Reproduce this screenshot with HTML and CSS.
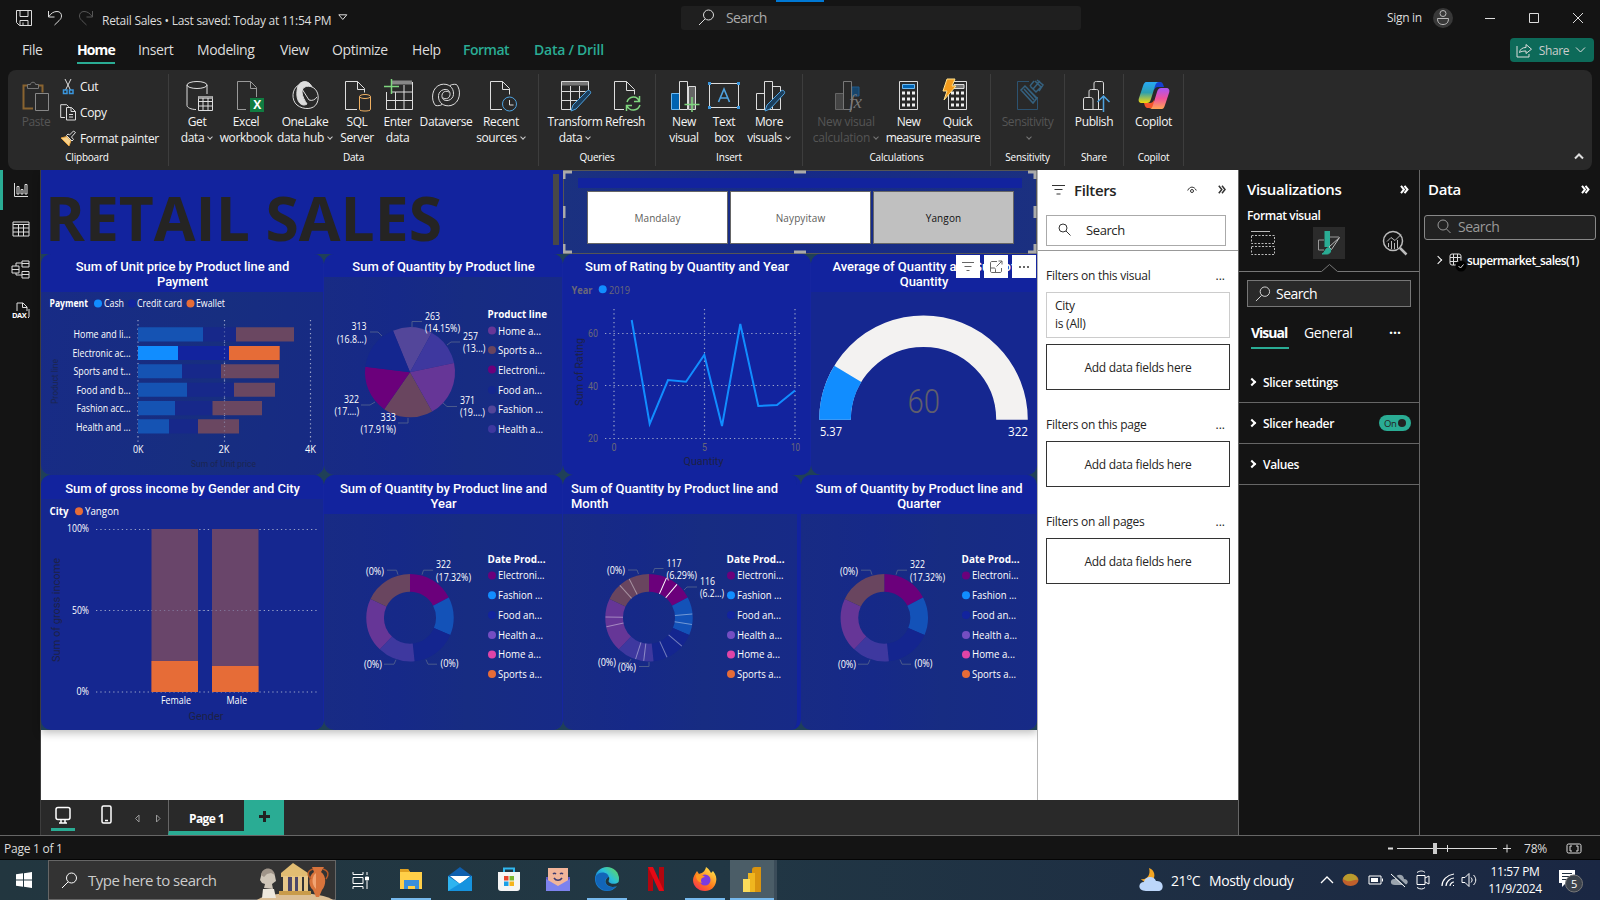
FILE: index.html
```html
<!DOCTYPE html>
<html lang="en">
<head>
<meta charset="utf-8">
<title>Retail Sales</title>
<link rel="stylesheet" href="styles.css">
</head>
<body>
<div class="app">
<header class="titlebar">
  <svg class="i-save" width="16" height="16" viewBox="0 0 16 16"><path d="M.5.5h15v15H3.5l-3-3zM4 .5v6h8v-6M4 15.5v-5h8v5M7 15.500v-3" /></svg>
  <svg class="i-undo" width="16" height="16" viewBox="0 0 16 16"><path d="M1.500 1v6h6M1.800 6.700C4 3 7 1.500 10 1.500c3 0 4.500 2 4.500 4.500 0 2-1 3.200-2.500 4.700L7.500 15"/></svg>
  <svg class="i-redo" width="16" height="16" viewBox="0 0 16 16"><path d="M14.500 1v6h-6M14.200 6.700C12 3 9 1.500 6 1.500c-3 0-4.500 2-4.500 4.500 0 2 1 3.200 2.500 4.700L8.500 15"/></svg>
  <span class="doc">Retail Sales • Last saved: Today at 11:54 PM</span>
  <svg class="i-dd" width="10" height="7" viewBox="0 0 10 7"><path d="M.8.8h8L4.800 5.500z"/></svg>
  <div class="topsearch"><svg width="17" height="17" viewBox="0 0 17 17"><circle cx="10.500" cy="6" r="5"/><path d="M7 10l-6 6"/></svg><span>Search</span></div>
  <span class="signin">Sign in</span>
  <span class="avatar"><svg width="14" height="18" viewBox="0 0 14 18"><circle cx="7" cy="4.500" r="3"/><path d="M1.500 9.500h11c0 4-2 6-5.500 6s-5.500-2-5.500-6z"/></svg></span>
  <svg class="i-min" width="12" height="12" viewBox="0 0 12 12"><path d="M1 6.500h10"/></svg>
  <svg class="i-max" width="12" height="12" viewBox="0 0 12 12"><path d="M1.500 1.500h9v9h-9z"/></svg>
  <svg class="i-close" width="12" height="12" viewBox="0 0 12 12"><path d="M1 1l10 10M11 1L1 11"/></svg>
</header>
<nav class="tabs">
  <span class="t-file">File</span><span class="t-home">Home</span><span class="t-insert">Insert</span><span class="t-model">Modeling</span><span class="t-view">View</span><span class="t-opt">Optimize</span><span class="t-help">Help</span><span class="t-format ctx">Format</span><span class="t-data ctx">Data / Drill</span>
  <button class="share"><svg width="17" height="15" viewBox="0 0 17 15"><path d="M1 3v11h12v-3M3.500 9.500C4 6 6.500 4.500 10 4.500v-3l5.500 4.700L10 10.500V8C7 8 5 8.500 3.500 9.500z"/></svg><span>Share</span><svg width="11" height="8" viewBox="0 0 11 8"><path d="M1 1.500l4.500 4.500L10 1.500"/></svg></button>
</nav>
<section class="ribbon">
  <div class="group g-clip">
    <div class="tools">
      <div class="tool off"><svg width="30" height="32" viewBox="0 0 30 32"><path d="M12 28.500H2.500v-23h4M17 5.500h4.500v7" stroke="#8a6430" stroke-width="2"/><path d="M6.500 8.500v-4h3c0-3 5-3 5 0h3v4z" stroke="#777"/><path d="M14.500 13.500h13v17h-13z" stroke="#888"/></svg><span>Paste</span></div>
      <ul class="cliplist">
        <li><svg width="16" height="17" viewBox="0 0 16 17"><path d="M5 1l5.500 11M11 1L5.500 12" stroke="#ddd"/><rect x="3.500" y="12" width="3.500" height="3.500" stroke="#3a96dd" stroke-width="1.500"/><rect x="9.500" y="12" width="3.500" height="3.500" stroke="#3a96dd" stroke-width="1.500"/></svg>Cut</li>
        <li><svg width="16" height="17" viewBox="0 0 16 17"><path d="M5 13.500H.7V.7h6l2 2M6.500 3.500h5l4 4v8.500h-9zM11 3.500v4h4.500M9 10.500h4M9 13h4"/></svg>Copy</li>
        <li><svg width="16" height="17" viewBox="0 0 16 17"><path d="M1 8l6-1.500 4 4-2 5.500z" fill="#f7d08a" stroke="#e8a33d"/><path d="M6.500 5.500l5.500 5.500 1.500-1.500L11.500 7l4-4.500L13.500 1 9.500 5 8 4z"/></svg>Format painter</li>
      </ul>
    </div><p>Clipboard</p>
  </div>
  <div class="group g-data">
    <div class="tools">
      <div class="tool"><svg class="nudge" width="30" height="32" viewBox="0 0 30 32"><ellipse cx="13" cy="5" rx="10" ry="3.500"/><path d="M3 5v20.500c0 2 4 4 9 4M23 5v9"/><path d="M14.500 16.500h14v14h-14z" fill="#292929"/><path d="M14.500 17.500h14" stroke-width="3" stroke="#999"/><path d="M14.500 21.500h14M14.500 26h14M19 18v12M24 18v12"/></svg><span>Get<br>data<i></i></span></div>
      <div class="tool"><svg class="nudge" width="30" height="32" viewBox="0 0 30 32"><path d="M13 29.500H4.500v-28h13l6 6V17M17.500 1.500v7h6" stroke="#999"/><path d="M17 18h14v14H17z" fill="#107c41" stroke="none"/><text x="24" y="29" class="xl">X</text></svg><span>Excel<br>workbook</span></div>
      <div class="tool"><svg width="30" height="32" viewBox="0 0 30 32"><path d="M8 5.500C2 9 1 20 7 25c6 5 17 5 20-2 3-7 0-14-5-16"/><path d="M8 6c3-6 11-6 14 1-5-2-10 0-10 5 0 4 3 9 5 12-6 4-13-4-9-18z" fill="#ddd"/><path d="M12 9l7 11c3 1 6 0 8-3"/></svg><span>OneLake<br>data hub<i></i></span></div>
      <div class="tool"><svg width="30" height="32" viewBox="0 0 30 32"><path d="M15 29.500H3.500v-28h12l7 7v4M15.500 1.500v8h7"/><path d="M17.500 16.500v13c0 2 11 2 11 0v-13" stroke="#f0b062" fill="#292929"/><ellipse cx="23" cy="16.500" rx="5.500" ry="2" stroke="#f0b062"/></svg><span>SQL<br>Server</span></div>
      <div class="tool"><svg width="32" height="32" viewBox="0 0 32 32"><path d="M10 2.500h20" stroke="#888" stroke-width="4"/><path d="M4.500 12v17.500h26V2M4.500 20.500h26M9 12h21.500M13.500 12v17M22 5v24"/><path d="M2 6.500h15M9.500-1v15" stroke="#7fd67f" stroke-width="1.500"/></svg><span>Enter<br>data</span></div>
      <div class="tool"><svg width="30" height="32" viewBox="0 0 30 32"><path d="M4.500 25.500C-.5 20 .5 7 10 4.500 17 3 23 7 22.500 14.500c-.5 6-8.500 8-11 4C9.500 14 13 9.500 18 12M25.500 4.500C30.500 10 29.500 23 20 25.500 13 27 7 23 7.500 15.500c.5-6 8.500-8 11-4 2 4.500-1.500 9-6.500 6.500M4.500 25.500c2.500.5 5 0 6.500-1M25.500 4.500c-2.500-.5-5 0-6.500 1"/></svg><span>Dataverse</span></div>
      <div class="tool"><svg class="nudge" width="30" height="32" viewBox="0 0 30 32"><path d="M14 29.500H2.500v-28h12l7 7v6M14.500 1.500v8h7"/><circle cx="21.500" cy="24" r="7" stroke="#4fa3e0" fill="#292929"/><path d="M21.500 20v5h4"/></svg><span>Recent<br>sources<i></i></span></div>
    </div><p>Data</p>
  </div>
  <div class="group g-query">
    <div class="tools">
      <div class="tool"><svg width="30" height="32" viewBox="0 0 30 32"><path d="M1 3.500h28" stroke="#777" stroke-width="4"/><path d="M12 29.500H1.500v-28h27v9M1.500 11.500h24M1.500 20.500h17M10.500 6v23M19.500 6v13"/><path d="M11 31l2-6 14-14c2-2 5 1 3 3L16 29z" fill="#1b3e5c" stroke="#4fa3e0"/></svg><span>Transform<br>data<i></i></span></div>
      <div class="tool"><svg width="30" height="32" viewBox="0 0 30 32"><path d="M14 29.500H4.500v-28h12l8 8v5M16.500 1.500v9h8"/><path d="M17 22c2-6 10-7 12-1M29.500 16v5.500H24M30 25c-2 6-10 7-13 1M16.500 31v-5.500H22" stroke="#7fd67f" stroke-width="1.500"/></svg><span>Refresh</span></div>
    </div><p>Queries</p>
  </div>
  <div class="group g-insert">
    <div class="tools">
      <div class="tool"><svg width="30" height="32" viewBox="0 0 30 32"><path d="M2.500 13.500h8v16h-8z" fill="#0063b1" stroke="#6cb8f0"/><path d="M19.500 6.500h7v23h-7z" fill="#666"/><path d="M10.500 1.500h8v28h-8z" fill="#292929"/><path d="M15.500 24.500h15M23 17v15" stroke="#7fd67f" stroke-width="1.500"/></svg><span>New<br>visual</span></div>
      <div class="tool"><svg width="32" height="32" viewBox="0 0 32 32"><path d="M1.500 3.500h29v24h-29z"/><path d="M0 2h3v3H0zM29 2h3v3h-3zM0 26h3v3H0zM29 26h3v3h-3z" fill="#3a96dd" stroke="none"/><path d="M10.500 22L16 9l5.500 13M12.500 18h7" stroke="#4fa3e0" stroke-width="1.600"/></svg><span>Text<br>box</span></div>
      <div class="tool"><svg width="30" height="32" viewBox="0 0 30 32"><path d="M2.500 13.500h8v16h-8zM10.500 1.500h8v28h-8zM18.500 6.500h8v23h-8z"/><path d="M11 31l2-6 14-14c2-2 5 1 3 3L16 29z" fill="#1b3e5c" stroke="#4fa3e0"/></svg><span>More<br>visuals<i></i></span></div>
    </div><p>Insert</p>
  </div>
  <div class="group g-calc">
    <div class="tools">
      <div class="tool off"><svg class="nudge" width="30" height="32" viewBox="0 0 30 32"><path d="M2.500 13.500h8v16h-8z" fill="#444" stroke="#666"/><path d="M19 7h7v9h-7z" fill="#17456b" stroke="#205a8a"/><path d="M10.500 1.500h8v28h-8z" fill="#292929" stroke="#777"/><text x="22" y="28" class="fx">fx</text></svg><span>New visual<br>calculation<i></i></span></div>
      <div class="tool"><svg width="30" height="32" viewBox="0 0 30 32"><path d="M5.500 1.500h18v28h-18z"/><path d="M8.500 4.500h12v4h-12z" fill="#0063b1" stroke="#6cb8f0"/><path d="M8 13h13M8 19h13M8 25h13" stroke-width="3" stroke-dasharray="3 2" stroke="#eee"/></svg><span>New<br>measure</span></div>
      <div class="tool"><svg width="30" height="32" viewBox="0 0 30 32"><path d="M5.500 1.500h18v28h-18z"/><path d="M11 4.500h10v4H11z" fill="#777"/><path d="M8 13h13M8 19h13M8 25h13" stroke-width="3" stroke-dasharray="3 2" stroke="#eee"/><path d="M4-1h8L9 6h4L1 20l3-9H0z" fill="#f29b1d" stroke="#ffe08a"/></svg><span>Quick<br>measure</span></div>
    </div><p>Calculations</p>
  </div>
  <div class="group g-sens">
    <div class="tools"><div class="tool off"><svg class="nudge" width="30" height="32" viewBox="0 0 30 32"><path d="M14 1.500H2.500v28h20V17" stroke="#2c5270"/><path d="M6 10l4-4 12 12-4 5zM9 9l10 11M12 8l9 10M15 6l4-5M15 6l6 6 5-5-6-6M18 9l7-8M22 0l6 5-4 6" stroke="#35617f" stroke-width="1.500"/></svg><span>Sensitivity<br><i></i></span></div></div><p>Sensitivity</p>
  </div>
  <div class="group g-share">
    <div class="tools"><div class="tool"><svg width="30" height="32" viewBox="0 0 30 32"><g transform="translate(2)"><path d="M12 29.500V20c0-2-1-2.500-2.500-2.500h-5C3 17.500 2.500 18 2.500 20v9.500h19M8 17.500V12c0-2 .5-2.500 2.500-2.500h5c1.500 0 2 .5 2 2.500v17M13 9.500V4c0-2 .5-2.500 2.500-2.500h5c1.500 0 2 .5 2 2.500v10"/><path d="M22.500 32V16.500M16.500 22l6-6 6 6" stroke="#4fa3e0" stroke-width="1.500"/></g></svg><span>Publish</span></div></div><p>Share</p>
  </div>
  <div class="group g-copilot">
    <div class="tools"><div class="tool"><svg width="32" height="32" viewBox="0 0 32 32"><defs><linearGradient id="ca" x1="0" y1="0" x2="0" y2="1"><stop offset="0" stop-color="#27a8f5"/><stop offset=".5" stop-color="#2c9fb0"/><stop offset="1" stop-color="#f5d90a"/></linearGradient><linearGradient id="cb" x1="0" y1="0" x2="0" y2="1"><stop offset="0" stop-color="#a855f7"/><stop offset=".5" stop-color="#f0529c"/><stop offset="1" stop-color="#ffa654"/></linearGradient></defs><g stroke="none"><path d="M16 2h6c2 0 3 1 4 5h-6c-2 0-3 1-4 3z" fill="#1440d0"/><path d="M16 28h-6c-2 0-3-1-4-5h6c2 0 3-1 4-3z" fill="#f4552c"/><path d="M8 2h13c-2 0-3 1-4 4l-4 13c-1 3-2 4-4 4H4c-3 0-4-2-3-5l4-12c1-3 2-4 3-4z" fill="url(#ca)"/><path d="M24 29H11c2 0 3-1 4-4l4-13c1-3 2-4 4-4h5c3 0 4 2 3 5l-4 12c-1 3-2 4-3 4z" fill="url(#cb)"/></g></svg><span>Copilot</span></div></div><p>Copilot</p>
  </div>
  <svg class="collapse" width="10" height="7" viewBox="0 0 10 7"><path d="M1 5.500l4-4 4 4"/></svg>
</section>
<main class="work">
  <aside class="rail">
    <svg width="16" height="16" viewBox="0 0 16 16"><path d="M1.500 1v13.500H15M4 4.500h2v7.500H4zM8 7.500h2V12H8zM12 2.500h2V12h-2z"/></svg>
    <svg width="18" height="16" viewBox="0 0 18 16"><path d="M1 1h16v14H1zM1 3.500h16M1 7h16M1 11h16M6.500 3.500V15M11.500 3.500V15"/></svg>
    <svg width="19" height="19" viewBox="0 0 19 19"><path d="M1 6h7v7H1zM1 9.500h7M11 1h7v6h-7zM11 3.500h7M11 11.500h7v6.500h-7zM11 14.500h7M5 6V3h6M5 13v2h6"/></svg>
    <svg width="18" height="17" viewBox="0 0 18 17"><path d="M5 9V1h6l4 4v4M10.500 1v4.500H15M17 7v8l-1 1"/><text x="0" y="15.500" class="dax">DAX</text></svg>
  </aside>
  <section class="center">
  <div class="upper">
  <div class="canvas">
    <div class="page">
      <div class="row1">
        <div class="hero"><h1>RETAIL SALES</h1><i class="grip"></i></div>
        <div class="slicer">
          <div class="slhead"></div>
          <div class="slbtns"><span>Mandalay</span><span>Naypyitaw</span><span class="on">Yangon</span></div>
          <svg class="handles" width="474" height="84" viewBox="0 0 474 84"><path d="M.5.5h473v83H.5z" stroke="#555"/><path d="M1 9V2h8M465 2h7v7M1 74v8h8M465 82h7v-8M1 36v12M472 36v12M231 2h12M231 82h12" stroke="#aaa" stroke-width="3"/></svg>
        </div>
      </div>
      <div class="row2">
        <article class="card deep"><h2 class="two">Sum of Unit price by Product line and<br>Payment</h2>
          <svg class="plot" width="283" height="183" viewBox="41 292 283 183">
            <g class="lbl"><text class="b" x="49.500" y="307" textLength="38.500">Payment</text><circle cx="98" cy="303.500" r="4" fill="#118dff"/><text x="104" y="307" textLength="20">Cash</text><circle cx="132" cy="303.500" r="4" fill="#12239e"/><text x="137" y="307" textLength="45">Credit card</text><circle cx="190.500" cy="303.500" r="4" fill="#e66c37"/><text x="196" y="307" textLength="29">Ewallet</text>
            <text x="73.500" y="338" textLength="57">Home and li...</text><text x="72.500" y="356.500" textLength="58">Electronic ac...</text><text x="73.500" y="375" textLength="57">Sports and t...</text><text x="76.500" y="393.500" textLength="54">Food and b...</text><text x="76.500" y="412" textLength="54">Fashion acc...</text><text x="76" y="430.500" textLength="54.500">Health and ...</text>
            <text x="133" y="453" textLength="10.500">0K</text><text x="218.500" y="453" textLength="11">2K</text><text x="305" y="453" textLength="11">4K</text></g>
            <path class="grid" d="M138 320v123M224.500 320v123M310.500 320v123"/>
            <g fill="#1553b3"><path d="M138 327.300h65v14.300h-65zM138 364.300h44v14h-44zM138 382.700h49v14h-49zM138 401h37v14.300h-37zM138 419.300h31v14.300h-31z"/></g>
            <g fill="#17288a"><path d="M203 327.300h33v14.300h-33zM182 364.300h39v14h-39zM187 382.700h47v14h-47zM175 401h37.500v14.300H175zM169 419.300h29v14.300h-29z"/></g>
            <g fill="#6a4761"><path d="M236 327.300h58v14.300h-58zM221 364.300h58v14h-58zM234 382.700h41v14h-41zM212.500 401H262v14.300h-49.500zM198 419.300h41v14.300h-41z"/></g>
            <path d="M138 346h40v14h-40z" fill="#118dff"/><path d="M178 346h51v14h-51z" fill="#12239e"/><path d="M229 346h50.700v14H229z" fill="#e66c37"/>
            <path class="grid dim" d="M224.500 327v108"/>
            <g class="axis faint"><text x="191" y="466.500" textLength="65">Sum of Unit price</text><text transform="translate(57.500 404) rotate(-90)" textLength="45">Product line</text></g>
          </svg></article>
        <article class="card mid"><h2>Sum of Quantity by Product line</h2>
          <svg class="plot" width="239" height="198" viewBox="324 277 239 198">
            <g transform="rotate(-112.200 410 372.300)" stroke-width="45"><circle class="arc" cx="410" cy="372.300" r="22.500" pathLength="1859" stroke="#53469a" stroke-dasharray="263 1596"/><circle class="arc" cx="410" cy="372.300" r="22.500" pathLength="1859" stroke="#3e389f" stroke-dasharray="257 1602" stroke-dashoffset="-263"/><circle class="arc" cx="410" cy="372.300" r="22.500" pathLength="1859" stroke="#663697" stroke-dasharray="371 1488" stroke-dashoffset="-520"/><circle class="arc" cx="410" cy="372.300" r="22.500" pathLength="1859" stroke="#69455f" stroke-dasharray="333 1526" stroke-dashoffset="-891"/><circle class="arc" cx="410" cy="372.300" r="22.500" pathLength="1859" stroke="#6b007b" stroke-dasharray="322 1537" stroke-dashoffset="-1224"/><circle class="arc" cx="410" cy="372.300" r="22.500" pathLength="1859" stroke="#14268f" stroke-dasharray="313 1546" stroke-dashoffset="-1546"/></g>
            <path class="lead" d="M412 327v-5.500h10M447 345l4-3h9M443 403l4 3.500h10M408 418v5h-10M375 402l-5 3h-9M382 336l-4-4h-8"/>
            <g class="lbl"><text x="425" y="320" textLength="15">263</text><text x="425" y="332" textLength="35">(14.15%)</text><text x="463" y="340" textLength="15">257</text><text x="463" y="352" textLength="22.500">(13...)</text><text x="460" y="404" textLength="15">371</text><text x="460" y="416" textLength="25">(19....)</text><text x="380.500" y="421" textLength="15.500">333</text><text x="360.500" y="433" textLength="35.500">(17.91%)</text><text x="344" y="403" textLength="15">322</text><text x="334.500" y="415" textLength="24.500">(17....)</text><text x="351.500" y="330" textLength="15">313</text><text x="337" y="343" textLength="29.500">(16.8...)</text>
            <text class="b" x="487.500" y="318" textLength="59.500">Product line</text><text x="498" y="334.500" textLength="43">Home a...</text><text x="498" y="354" textLength="44">Sports a...</text><text x="498" y="373.500" textLength="47">Electroni...</text><text x="498" y="393.500" textLength="44">Food an...</text><text x="498" y="413" textLength="45">Fashion ...</text><text x="498" y="432.500" textLength="45">Health a...</text></g>
            <circle cx="492" cy="330.500" r="4" fill="#663697"/><circle cx="492" cy="350" r="4" fill="#69455f"/><circle cx="492" cy="369.500" r="4" fill="#6b007b"/><circle cx="492" cy="390" r="4" fill="#14268f"/><circle cx="492" cy="409.500" r="4" fill="#53469a"/><circle cx="492" cy="429" r="4" fill="#3e389f"/>
          </svg></article>
        <article class="card solid"><h2>Sum of Rating by Quantity and Year</h2>
          <svg class="plot" width="248" height="198" viewBox="563 277 248 198">
            <g class="lbl gray"><text class="b" x="571.500" y="293.500" textLength="21">Year</text><text x="609" y="293.500" textLength="21">2019</text></g><circle cx="602.700" cy="289.300" r="4" fill="#118dff"/>
            <g class="din gray"><text x="588" y="336.500" textLength="10">60</text><text x="588" y="389.500" textLength="10">40</text><text x="588" y="441.500" textLength="10">20</text><text x="611.500" y="450.500" textLength="5">0</text><text x="702" y="450.500" textLength="5">5</text><text x="791" y="450.500" textLength="9">10</text></g>
            <path class="grid" d="M605 333.500h196M605 385.500h196M605 438.500h196M614 309v130M704.500 309v130M795 309v130"/>
            <path d="M631.700 320l18 104 18.300-44 18 1.700 18.300-26.700L722 426l18.300-102 18 82 18.700-1 18-14.500" fill="none" stroke="#118dff" stroke-width="2"/>
            <g class="axis dark"><text x="683.500" y="465" textLength="40">Quantity</text><text transform="translate(582.500 406) rotate(-90)" textLength="68">Sum of Rating</text></g>
          </svg></article>
        <article class="card light square"><h2 class="two">Average of Quantity and Sum of<br>Quantity</h2>
          <svg class="plot" width="226" height="183" viewBox="811 292 226 183">
            <path d="M835 419.700a88.500 88.500 0 0 1 177 0" fill="none" stroke="#f3f2f1" stroke-width="31.600"/><path d="M835 419.700a88.500 88.500 0 0 1 12.800-45.800" fill="none" stroke="#118dff" stroke-width="31.600"/>
            <text class="sixty" x="907.500" y="413" textLength="32.500">60</text><g class="lbl big"><text x="820" y="436" textLength="22">5.37</text><text x="1008" y="436" textLength="20">322</text></g>
          </svg>
          <div class="hover"><span><svg width="14" height="12" viewBox="0 0 14 12"><path d="M1 1.500h12M3.500 5.500h7M5.500 9.500h3"/></svg></span><span><svg width="14" height="14" viewBox="0 0 14 14"><path d="M8 1.500H3c-1 0-1.500.5-1.500 1.500v8c0 1 .5 1.500 1.500 1.500h8c1 0 1.500-.5 1.500-1.500V8M9.500 1H13v3.500M13 1L7.500 6.500M1.500 8H5c1 0 1.500.5 1.500 1.500V13"/></svg></span><span><svg width="14" height="4" viewBox="0 0 14 4"><path d="M2 2h2M6 2h2M10 2h2" stroke-width="2"/></svg></span></div>
        </article>
      </div>
      <div class="row3">
        <article class="card light"><h2>Sum of gross income by Gender and City</h2>
          <svg class="plot" width="283" height="231" viewBox="41 499 283 231">
            <g class="lbl"><text class="b" x="49.500" y="515" textLength="19">City</text><circle cx="79" cy="511.300" r="4" fill="#e66c37"/><text x="85" y="515" textLength="34">Yangon</text><text x="67" y="532" textLength="22">100%</text><text x="72" y="614" textLength="17">50%</text><text x="76.500" y="695" textLength="12.500">0%</text><text x="161" y="704" textLength="30">Female</text><text x="226.500" y="704" textLength="20.500">Male</text></g>
            <path class="grid" d="M96 529.500h221M96 610.500h221M96 692h221"/>
            <path d="M151.500 529H198v163h-46.500zM212 529h46.500v163H212z" fill="#69456a"/><path d="M151.500 661H198v31h-46.500zM212 666h46.500v26H212z" fill="#e66c37"/><path class="grid dim" d="M151 610.500h108"/>
            <g class="axis dark"><text x="188.500" y="719.500" textLength="35">Gender</text><text transform="translate(60 662) rotate(-90)" textLength="104">Sum of gross income</text></g>
          </svg></article>
        <article class="card mid"><h2 class="two">Sum of Quantity by Product line and<br>Year</h2>
          <svg class="plot" width="239" height="216" viewBox="324 514 239 216">
            <defs><g id="ring" stroke-width="17.700"><g transform="rotate(-90)"><circle class="arc" r="34.900" pathLength="1859" stroke="#6b007b" stroke-dasharray="322 1537"/><circle class="arc" r="34.900" pathLength="1859" stroke="#1352b8" stroke-dasharray="263 1596" stroke-dashoffset="-322"/><circle class="arc" r="34.900" pathLength="1859" stroke="#14258f" stroke-dasharray="313 1546" stroke-dashoffset="-585"/><circle class="arc" r="34.900" pathLength="1859" stroke="#3e389f" stroke-dasharray="257 1602" stroke-dashoffset="-898"/><circle class="arc" r="34.900" pathLength="1859" stroke="#663697" stroke-dasharray="371 1488" stroke-dashoffset="-1155"/><circle class="arc" r="34.900" pathLength="1859" stroke="#69455f" stroke-dasharray="333 1526" stroke-dashoffset="-1526"/></g></g>
            <g id="dots"><circle cy="575.500" r="4" fill="#6b007b"/><circle cy="595.300" r="4" fill="#118dff"/><circle cy="615" r="4" fill="#12239e"/><circle cy="635" r="4" fill="#744ec2"/><circle cy="654.500" r="4" fill="#e044a7"/><circle cy="674" r="4" fill="#e66c37"/></g>
            <path id="leads" d="M-12-43l-1.500-4.500H-23M12-43l1.500-4.500H23M-14 42l-2 4.500h-10M16 42l2 4.500h9"/></defs>
            <use href="#ring" x="410" y="617.700"/><use href="#dots" x="492"/><use href="#leads" class="lead" x="410" y="617.700"/>
            <g class="lbl"><text x="436" y="568" textLength="15">322</text><text x="436" y="581" textLength="35">(17.32%)</text><text x="366" y="575" textLength="18">(0%)</text><text x="364" y="668" textLength="18">(0%)</text><text x="440.500" y="667" textLength="18">(0%)</text><text class="b" x="487.500" y="563" textLength="58">Date Prod...</text><text x="498" y="579" textLength="46.500">Electroni...</text><text x="498" y="599" textLength="44.500">Fashion ...</text><text x="498" y="619" textLength="44">Food an...</text><text x="498" y="639" textLength="45">Health a...</text><text x="498" y="658" textLength="43">Home a...</text><text x="498" y="678" textLength="44">Sports a...</text></g>
          </svg></article>
        <article class="card mid gap"><h2 class="two left">Sum of Quantity by Product line and<br>Month</h2>
          <svg class="plot" width="238" height="216" viewBox="563 514 238 216">
            <use href="#ring" x="649" y="617.700"/><use href="#dots" x="731"/>
            <g transform="translate(649 617.700)" stroke="#fff" stroke-width="1"><path d="M0-26v-17.500" transform="rotate(23.700)"/><path d="M0-26v-17.500" transform="rotate(40)"/><g opacity=".4"><path d="M0-26v-17.500" transform="rotate(85)"/><path d="M0-26v-17.500" transform="rotate(99)"/><path d="M0-26v-17.500" transform="rotate(131)"/><path d="M0-26v-17.500" transform="rotate(155.500)"/><path d="M0-26v-17.500" transform="rotate(187)"/><path d="M0-26v-17.500" transform="rotate(198)"/><path d="M0-26v-17.500" transform="rotate(258)"/><path d="M0-26v-17.500" transform="rotate(271)"/><path d="M0-26v-17.500" transform="rotate(318)"/><path d="M0-26v-17.500" transform="rotate(333)"/></g></g>
            <path class="lead" d="M638.500 574l-1.500-4h-9M653 573l1.500-4.500h9M684 590l3-3h10M631 659l-2 3.500h-10M649 662v4.500h-10"/>
            <g class="lbl"><text x="666.500" y="567" textLength="15">117</text><text x="666.500" y="579" textLength="30.500">(6.29%)</text><text x="700" y="585" textLength="15">116</text><text x="700" y="597" textLength="24">(6.2...)</text><text x="607" y="574" textLength="18">(0%)</text><text x="598" y="666" textLength="18">(0%)</text><text x="618" y="671" textLength="18">(0%)</text><text class="b" x="726.500" y="563" textLength="58">Date Prod...</text><text x="737" y="579" textLength="46.500">Electroni...</text><text x="737" y="599" textLength="44.500">Fashion ...</text><text x="737" y="619" textLength="44">Food an...</text><text x="737" y="639" textLength="45">Health a...</text><text x="737" y="658" textLength="43">Home a...</text><text x="737" y="678" textLength="44">Sports a...</text></g>
          </svg></article>
        <article class="card mid"><h2 class="two">Sum of Quantity by Product line and<br>Quarter</h2>
          <svg class="plot" width="236" height="216" viewBox="801 514 236 216">
            <use href="#ring" x="884.300" y="617.700"/><use href="#dots" x="966"/><use href="#leads" class="lead" x="884" y="617.700"/>
            <g class="lbl"><text x="910" y="568" textLength="15">322</text><text x="910" y="581" textLength="35">(17.32%)</text><text x="840" y="575" textLength="18">(0%)</text><text x="838" y="668" textLength="18">(0%)</text><text x="914.500" y="667" textLength="18">(0%)</text><text class="b" x="961.500" y="563" textLength="58">Date Prod...</text><text x="972" y="579" textLength="46.500">Electroni...</text><text x="972" y="599" textLength="44.500">Fashion ...</text><text x="972" y="619" textLength="44">Food an...</text><text x="972" y="639" textLength="45">Health a...</text><text x="972" y="658" textLength="43">Home a...</text><text x="972" y="678" textLength="44">Sports a...</text></g>
          </svg></article>
      </div>
    </div>
  </div>
  <aside class="filters">
    <div class="fhead"><svg width="13" height="12" viewBox="0 0 13 12"><path d="M0 1.500h13M2.500 5.500h8M4.500 10h4"/></svg><b>Filters</b><svg class="eye" width="10" height="8" viewBox="0 0 10 8"><path d="M.7 4.500c2-4.500 6.500-4.500 8.600 0"/><circle cx="5" cy="5" r="1.500"/></svg><svg class="chev" width="8" height="9" viewBox="0 0 8 9"><path d="M.8.800l3 3.700-3 3.700M4 .8l3 3.700-3 3.700"/></svg></div>
    <div class="fsearch"><svg width="13" height="13" viewBox="0 0 13 13"><circle cx="5" cy="5" r="4"/><path d="M8 8l4.500 4.500"/></svg><span>Search</span></div>
    <div class="fbody">
      <h3>Filters on this visual<em>...</em></h3><div class="city">City<br>is (All)</div><div class="add">Add data fields here</div>
      <h3>Filters on this page<em>...</em></h3><div class="add">Add data fields here</div>
      <h3>Filters on all pages<em>...</em></h3><div class="add">Add data fields here</div>
    </div>
  </aside>
  </div>
  <footer class="pages">
    <span class="dev"><svg width="18" height="19" viewBox="0 0 18 19"><rect x="2" y="1.500" width="14" height="12" rx="2"/><path d="M7 13.500v3M11 13.500v3M5 17h8"/></svg></span>
    <svg class="phone" width="12" height="20" viewBox="0 0 12 20"><rect x="1" y="1" width="9" height="17" rx="1.500"/><path d="M4 15.500h3"/></svg>
    <svg class="arr" width="28" height="9" viewBox="0 0 28 9"><path d="M5 1v7L1.500 4.500zM22.500 1v7L26 4.500z"/></svg>
    <span class="ptab">Page 1</span><span class="plus"><svg width="11" height="11" viewBox="0 0 11 11"><path d="M5.500 0v11M0 5.500h11"/></svg></span>
  </footer>
  </section>
  <aside class="viz">
    <div class="phead"><b>Visualizations</b><svg width="9" height="9" viewBox="0 0 9 9"><path d="M1 .8l3 3.700-3 3.700M4.500.8l3 3.700-3 3.700"/></svg></div>
    <h4>Format visual</h4>
    <div class="modes"><svg width="26" height="26" viewBox="0 0 26 26"><path d="M1 1.500h19"/><path d="M1.500 5.500h23v8h-23zM1.500 16.500h23v8h-23z" stroke-dasharray="2 1.500"/></svg><span class="sel"><svg width="24" height="26" viewBox="0 0 24 26"><path d="M7 20H1.500V10H7M13 7h9" stroke="#999"/><path d="M7.500 1H13v16H7.500z" fill="#2aac94" stroke="none"/><path d="M22.500 7.500L12 17l2.500 2.500z" fill="#2b2b2b"/><path d="M5 24c3-1 3-6 6.500-6.500 3 1 3 6-1 6.500z" fill="#2aac94" stroke="#2aac94"/></svg></span><svg width="26" height="26" viewBox="0 0 26 26"><circle cx="11" cy="11" r="9.500" stroke-width="1.500"/><path d="M5 11.500l4-4 4 3 6-6M6.500 13v4M9.500 11v8M12.500 13v6M15.500 10v8"/><path d="M18 18l6.500 6.500" stroke-width="2.500"/></svg></div>
    <svg class="notch" width="181" height="8" viewBox="0 0 181 8"><path d="M0 7.500h82.500l8-7 8 7H181"/></svg>
    <div class="vsearch"><svg width="16" height="16" viewBox="0 0 17 17"><circle cx="10.500" cy="6" r="5"/><path d="M7 10l-6 6"/></svg>Search</div>
    <div class="vtabs"><b>Visual</b><span>General</span><em>...</em></div>
    <div class="opt"><i></i>Slicer settings</div><div class="opt"><i></i>Slicer header<span class="toggle">On<u></u></span></div><div class="opt"><i></i>Values</div>
  </aside>
  <aside class="data">
    <div class="phead"><b>Data</b><svg width="9" height="9" viewBox="0 0 9 9"><path d="M1 .8l3 3.700-3 3.700M4.500.8l3 3.700-3 3.700"/></svg></div>
    <div class="dsearch"><svg width="14" height="15" viewBox="0 0 14 15"><circle cx="6" cy="6" r="5"/><path d="M9.500 10l4 4"/></svg>Search</div>
    <div class="tree"><i></i><svg width="18" height="19" viewBox="0 0 18 19"><rect x="1" y="1" width="11" height="11" rx="2"/><path d="M1 4.500h11M1 8.500h11M4.500 1v11M8.500 1v11"/><circle cx="12" cy="13" r="5.500" fill="#000" stroke="none"/><path d="M9.500 13l2 2 3-3.500"/></svg>supermarket_sales(1)</div>
  </aside>
</main>
<div class="status"><span>Page 1 of 1</span><svg width="200" height="16" viewBox="0 0 200 16"><path d="M2 7.500h5" stroke-width="2"/><path d="M11 7.500h100M61.500 4v7M117 7.500h8M121 3.500v8"/><path d="M47 2h4v11h-4z" fill="#ccc" stroke="none"/><rect x="181" y="3" width="14" height="9" rx="1.500"/><path d="M186 5h-2v5h2M190 5h2v5h-2" stroke-width="1"/><text x="138" y="12" textLength="23">78%</text></svg></div>
<div class="taskbar">
  <svg class="start" width="16" height="16" viewBox="0 0 16 16"><path d="M0 2.300l7-1v6.200H0zM8 1.200L16 0v7.500H8zM0 8.500h7v6.200l-7-1zM8 8.500h8V16l-8-1.200z" fill="#fff" stroke="none"/></svg>
  <div class="tsearch"><svg width="17" height="17" viewBox="0 0 17 17"><circle cx="10.500" cy="6" r="5"/><path d="M7 10l-6 6"/></svg><span>Type here to search</span>
    <svg class="art" width="80" height="38" viewBox="0 0 80 38"><g stroke="none"><ellipse cx="40" cy="41" rx="40" ry="10" fill="#dcbf96"/><path d="M26 11L38 1l15 10v4H26z" fill="#e2bd72"/><path d="M28 14h5v17h-5zM36 14h4v17h-4zM43 14h4v17h-4zM49 14h4v17h-4z" fill="#e8c88a"/><path d="M33 15h4v16h-4zM40 15h3v16h-3z" fill="#4c4668"/><path d="M24 29h32v4H24z" fill="#c99b4a"/><path d="M8 27h11l2 9H7z" fill="#eee8dd"/><path d="M9 26l1-4-3-1-2-3 1-4c1-8 12-8 14 0l1 5-4 3 1 5z" fill="#cfc6b9"/><path d="M6 13c1-8 12-9 14 0l-4-2-4 1-3 3z" fill="#a0958a"/><path d="M57 5h12l-3 5c6 4 5 14 1 18l-3 7h-3l-3-7c-5-4-5-14 1-18z" fill="#d9743c"/><path d="M59 13c-3 6-1 11 2 14V11z" fill="#f2a473"/></g><path d="M58 7c-6 2-6 6-2 10M68 7c6 2 6 6 3 10" stroke="#b65a28" stroke-width="1.500"/></svg></div>
  <svg class="tview" width="17" height="17" viewBox="0 0 17 17"><path d="M1 0v2.500h10V0M1 5.500h10v6H1zM1 17v-2.500h10V17M15 0v3M15 9v8"/><path d="M13.500 5h3v3h-3z" fill="#fff"/></svg>
  <div class="apps">
    <span class="run"><svg width="24" height="22" viewBox="0 0 24 22"><g stroke="none"><path d="M1 1h8l2 3h12v17H1z" fill="#ffcf48"/><path d="M1 1h8l2 3H1z" fill="#e0a020"/><path d="M5 12h15v9h-4v-3H9v3H5z" fill="#3a8fdb"/></g></svg></span>
    <span><svg width="24" height="24" viewBox="0 0 24 24"><g stroke="none"><path d="M0 9L12 0l12 9v15H0z" fill="#0f5fae"/><path d="M2 9h20L12 17z" fill="#fff"/><path d="M0 9l12 8L24 9v15H0z" fill="#2fb4f0"/><path d="M24 9v15H0z" fill="#1693df"/></g></svg></span>
    <span><svg width="24" height="24" viewBox="0 0 24 24"><path d="M7 6V1.500h10V6" stroke="#30b8f0" stroke-width="2"/><path d="M1 5h22v16c0 2-1 3-3 3H4c-2 0-3-1-3-3z" fill="#f5f5f5" stroke="none"/><g stroke="none"><path d="M7 9h4.500v4.500H7z" fill="#e8452c"/><path d="M12.500 9H17v4.500h-4.500z" fill="#7db72f"/><path d="M7 14.500h4.500V19H7z" fill="#1ba0e8"/><path d="M12.500 14.500H17V19h-4.500z" fill="#f5b41d"/></g></svg></span>
    <span><svg width="24" height="24" viewBox="0 0 24 24"><g stroke="none"><path d="M0 10h24v14H0z" fill="#5b5bc8"/><path d="M2 1h20v14l-10 5-10-5z" fill="#f2b59a"/><path d="M0 12l12 7 12-7v12H0z" fill="#7d82ee"/></g><path d="M7 7c1-1 2-1 3 0M14 7c1-1 2-1 3 0M8 11c2 3 6 3 8 0" stroke="#3d3a70" stroke-width="1.500"/></svg></span>
    <span class="run"><svg width="24" height="24" viewBox="0 0 24 24"><defs><linearGradient id="ed" x1="0" y1="1" x2="1" y2="0"><stop offset=".3" stop-color="#1782d8"/><stop offset=".6" stop-color="#2bc0d8"/><stop offset="1" stop-color="#6bdc4a"/></linearGradient></defs><g stroke="none"><circle cx="12" cy="12" r="12" fill="url(#ed)"/><path d="M1 9c4-6 13-4 13 2-5-1-6 7 2 9 3 0 5-1 6-2-3 6-12 8-18 2-3-3-4-7-3-11z" fill="#1265b8"/><path d="M14 10c1 3-2 4 1 6 3 1.500 6 1 9-1l-1 3.500c-5 3-12 1-12.500-4 0-2 1.500-4 3.500-4.500z" fill="#213440"/></g></svg></span>
    <span><svg width="16" height="24" viewBox="0 0 16 24"><g stroke="none"><path d="M0 0h5v24H0zM11 0h5v24h-5z" fill="#b1060f"/><path d="M0 0h5l11 24h-5z" fill="#e50914"/></g></svg></span>
    <span class="run"><svg width="24" height="24" viewBox="0 0 24 24"><defs><linearGradient id="ff" x1="0" y1="1" x2=".7" y2="0"><stop offset="0" stop-color="#f5225f"/><stop offset=".5" stop-color="#ff7a1a"/><stop offset="1" stop-color="#ffe14a"/></linearGradient></defs><g stroke="none"><path d="M4 4l2 3c3-1 6-2 7-7 3 2 4 4 5 6l2-2c3 4 4 7 3 11-1 5-5 9-11 9C5 24 0 19 0 13c0-3 2-6 4-9z" fill="url(#ff)"/><circle cx="12" cy="13" r="5.500" fill="#7a3be0"/><path d="M3 8c4-1 7 0 9 2-4 0-5 4-3 6-5-1-6-5-6-8z" fill="#ff981f"/></g></svg></span>
    <span class="run active"><svg width="20" height="25" viewBox="0 0 20 25"><g stroke="none"><path d="M13 0h6v25h-9V3c0-2 1-3 3-3z" fill="#d9930f"/><path d="M6 6h7v19H6z" fill="#f0b61f"/><path d="M1 12h7v13H1z" fill="#fbdb5a"/></g></svg></span>
  </div>
  <div class="tray">
    <svg class="wx" width="26" height="26" viewBox="0 0 26 26"><g stroke="none"><path d="M10 1c6 2 7 9 3 13-4 3-9 1-11-2 6 1 10-4 8-11z" fill="#f5a623"/><path d="M7 24c-9 0-8-9-2-9 1-6 10-7 12-1 8-1 9 10 2 10z" fill="#bcd6fa"/></g></svg>
    <span class="temp">21°C</span><span class="cloudy">Mostly cloudy</span>
    <svg width="160" height="20" viewBox="0 0 160 20"><path d="M1 13l6-6 6 6" stroke-width="1.300"/><g stroke="none"><ellipse cx="30.500" cy="10" rx="8" ry="6" fill="#c0602c"/><path d="M23 9c2-7 13-7 15 1-5-1-8 4-15-1z" fill="#b99b2d"/></g><path d="M49 6h12v8H49zM62.500 8.500v3"/><path d="M51 8h7v4h-7z" fill="#fff" stroke="none"/><path d="M75 15c-6 0-5-7 0-6 1-6 9-5 9 0 5 0 5 6 0 6z" fill="#9aa3ad" stroke="none"/><path d="M72 3l15 14" stroke="#1c2c40" stroke-width="2"/><path d="M71 4l14 13"/><path d="M97 5.500h8v9h-8zM105 8l4-2v8l-4-2M97 2.500c3-2 6-2 8 0M97 17.500c3 2 6 2 8 0"/><path d="M122 16c0-6 5-11 12-12M126 16c0-4 4-8 8-8M130 16c0-2 2-4 4-4M133 15.500h1" stroke-width="1.200"/><path d="M142 7.500h3l4-4v13l-4-4h-3zM151 7.500c1.500 2 1.500 3 0 5M153.500 5c3 3 3 7 0 10"/></svg>
    <span class="clock">11:57 PM<br>11/9/2024</span>
    <svg class="note" width="26" height="26" viewBox="0 0 26 26"><path d="M1 3h16v13H8l-4 4v-4H1z" fill="#fff" stroke="none"/><path d="M4 6.500h10M4 9.500h10M4 12.500h7" stroke="#203040"/><circle cx="16" cy="16.500" r="8.500" fill="#3c434c" stroke="#777"/><text x="13" y="21">5</text></svg>
  </div>
</div>
</div>
<script src="labels.js"></script>
</body>
</html>
```
FILE: labels.js
```js
// Chart labels condense their glyphs, not only the gaps between them.
document.querySelectorAll("text[textLength]").forEach(function (label) {
  label.setAttribute("lengthAdjust", "spacingAndGlyphs");
});
```
FILE: styles.css
```css
* { box-sizing: border-box; }
body { margin: 0; font-family: "Open Sans", "Noto Sans", sans-serif; background: #141414; color: #ddd; overflow: hidden; }
svg { display: block; flex: none; fill: none; stroke: #ddd; }
svg text { stroke: none; fill: #fff; }
h1, h2, h3, h4, p, ul { margin: 0; padding: 0; list-style: none; }
.app { width: 1600px; height: 900px; display: flex; flex-direction: column; white-space: nowrap; }

.titlebar { height: 35px; display: flex; align-items: center; padding-left: 16px; }
.i-undo { margin-left: 15px; }
.i-redo { margin-left: 15px; stroke: #555; }
.doc { width: 229px; margin: 5px 0 0 8px; font-size: 12px; letter-spacing: -.27px; }
.i-dd { margin-left: 7px; }
.topsearch { width: 400px; height: 24px; margin-left: 333px; padding-left: 17px; display: flex; align-items: center; gap: 11px; background: #1f1f1f; border-radius: 3px; font-size: 14px; letter-spacing: -.6px; color: #aaa; position: relative; }
.topsearch::before { content: ""; position: absolute; left: 95px; top: -6px; width: 48px; height: 2px; background: #0078d4; }
.signin { width: 37px; margin-left: 306px; font-size: 12px; letter-spacing: -.3px; }
.avatar { width: 20px; height: 20px; margin-left: 9px; border-radius: 50%; background: #383838; display: flex; align-items: center; justify-content: center; }
.avatar svg { stroke: #bbb; }
.i-min { margin-left: 31px; } .i-max { margin-left: 32px; } .i-close { margin-left: 32px; }

.tabs { height: 35px; display: flex; align-items: flex-start; font-size: 14px; line-height: 20px; letter-spacing: -.4px; padding: 5px 6px 0 22px; }
.tabs > span { flex: none; height: 24px; }
.t-file { width: 55px; } .t-home { width: 38px; margin-right: 23px; font-weight: 700; color: #fff; letter-spacing: -.9px; border-bottom: 2px solid #2aac94; }
.t-insert { width: 59px; } .t-model { width: 83px; } .t-view { width: 52px; } .t-opt { width: 80px; } .t-help { width: 51px; } .t-format { width: 71px; }
.ctx { color: #2aac94; font-weight: 600; letter-spacing: -.5px; } .t-data { letter-spacing: -.25px; }
.share { margin: -2px 0 0 auto; width: 84px; height: 24px; padding: 0 8px 0 6px; border: 0; border-radius: 4px; background: #0d6a59; color: #ccc; font: 12px "Open Sans"; letter-spacing: -.4px; display: flex; align-items: center; justify-content: space-between; }

.ribbon { height: 100px; margin: 0 8px; padding-top: 4px; background: #292929; border-radius: 8px; display: flex; position: relative; z-index: 1; }
.group { height: 92px; border-right: 1px solid #3d3d3d; display: flex; flex-direction: column; flex: none; }
.group p { font-size: 10px; line-height: 14px; text-align: center; letter-spacing: -.2px; color: #fff; }
.tools { height: 76px; padding-top: 6px; display: grid; justify-items: center; align-content: start; }
.tool { display: flex; flex-direction: column; align-items: center; text-align: center; font-size: 12px; line-height: 16px; letter-spacing: -.4px; color: #f4f4f4; }
.tool svg { overflow: visible; margin-bottom: 2px; }
.tool svg.nudge { transform: translateX(2px); }
.tool i { display: inline-block; width: 4px; height: 4px; margin: 0 1px 3px 4px; border: solid #ccc; border-width: 0 1px 1px 0; transform: rotate(45deg); }
.tool.off { color: #555; } .off i { border-color: #777; }
.g-clip { width: 161px; } .g-clip .tools { grid-template-columns: 46px 105px; padding-left: 5px; } .g-clip p { padding-right: 2px; }
.cliplist { justify-self: start; margin: -7px 0 0 1px; font-size: 12px; letter-spacing: -.35px; color: #f4f4f4; }
.cliplist li { height: 26px; display: flex; align-items: center; gap: 4px; }
.g-data { width: 370px; } .g-data .tools { grid-template-columns: 40px 58px 60px 44px 37px 60px 50px; padding-left: 8px; }
.g-query { width: 117px; } .g-query .tools { grid-template-columns: 58px 42px; padding-left: 7px; }
.g-insert { width: 147px; } .g-insert .tools { grid-template-columns: 40px 40px 50px; padding-left: 8px; }
.g-calc { width: 188px; } .g-calc .tools { grid-template-columns: 76px 49px 49px; padding-left: 5px; } .g-calc .tool { letter-spacing: -.5px; } .g-calc .off { letter-spacing: -.25px; }
.g-sens { width: 74px; } .g-share { width: 59px; } .g-copilot { width: 60px; }
.xl { font: 700 12px "Open Sans"; text-anchor: middle; } .fx { font: italic 19px "Liberation Serif"; letter-spacing: -1px; }
svg text.fx { fill: #777; text-anchor: middle; }
.collapse { margin: 79px 8px 0 auto; stroke-width: 2; }

.work { height: 665px; display: flex; }
.rail { width: 41px; border-right: 1px solid #3d3d3d; padding-top: 12px; display: flex; flex-direction: column; align-items: center; gap: 23px; position: relative; }
.rail::before { content: ""; position: absolute; left: 0; top: 0; width: 3px; height: 40px; background: #2aac94; }
.rail svg { margin-left: 1px; }
.dax { font: 700 7.500px "Open Sans"; letter-spacing: -.5px; }
.center { width: 1197px; display: flex; flex-direction: column; }
.upper { height: 630px; display: flex; }
.canvas { width: 996px; background: #fff; }
.page { height: 560px; background: #1f4058; box-shadow: 0 3px 8px rgba(0,0,0,.25); }
.row1 { height: 84px; display: grid; grid-template-columns: 522px 474px; }
.hero { background: #12239e; display: flex; padding: 4px 4px 0 4px; justify-content: space-between; }
.hero h1 { margin-top: -1px; font-size: 60.500px; line-height: 89px; font-weight: 700; letter-spacing: 0; color: #252423; height: 78px; }
.grip { width: 6px; height: 71px; background: #484848; }
.slicer { position: relative; background: linear-gradient(90deg, #1b3180, #162a88 50%, #1b3080); padding: 8px 15px; }
.slhead { height: 10px; background: #12239e; }
.slbtns { margin: 3px 8px 0 9px; display: grid; grid-template-columns: repeat(3, 1fr); gap: 2px; }
.slbtns span { height: 53px; border: 1px solid #666; background: #fff; color: #605e5c; font-size: 10px; letter-spacing: .1px; display: grid; place-items: center; }
.slbtns .on { background: #c0c0c0; color: #111; }
.handles { position: absolute; left: 0; top: 0; }
.row2, .row3 { display: grid; }
.row2 { height: 221px; grid-template-columns: 283px 239px 248px 226px; }
.row3 { height: 255px; grid-template-columns: 283px 239px 238px 236px; }
.card { border-radius: 10px; overflow: hidden; position: relative; border-right: 1px solid #1525a0; }
.square { border-top-right-radius: 0; }
.plot { stroke: none; }
.deep { background: linear-gradient(100deg, #182b86, #172e80 60%, #172a84); }
.mid { background: linear-gradient(90deg, #182b84, #162988 30%, #172c82 60%, #172a87); }
.light { background: #152790; }
.solid { background: #12239e; }
.gap { border-right: 4px solid #12239e; }
.card h2 { height: 23px; padding-top: 5px; background: #12239e; color: #fff; text-align: center; font: 500 13px/15px Roboto, sans-serif; letter-spacing: -.04px; padding-left: 1px; }
.card h2.two { height: 38px; }
.card h2.left { text-align: left; padding-left: 8px; }
.row3 .card h2 { height: 24px; padding-top: 6px; } .row3 .card h2.two { height: 39px; }
.lbl text { font-size: 10px; } .lbl .b { font-weight: 700; }
.lbl.big text { font-size: 12.500px; }
.gray text { fill: #6a6878; }
.din text, .axis text { font-family: Roboto, sans-serif; font-size: 11px; }
.dark text { fill: #1d2145; } .faint text { fill: #1b2550; font-size: 9.500px; }
.grid { stroke: #9aa3c8; stroke-dasharray: 1.300 3; stroke-width: 1.200; } .dim { opacity: .5; }
.lead { stroke: #4b5a8c; fill: none; } .arc { fill: none; }
.sixty { font: 300 33px Roboto, sans-serif; } svg text.sixty { fill: #605e6c; }
.hover { position: absolute; right: 0; top: 1px; display: flex; gap: 4px; }
.hover span { width: 24px; height: 23px; background: #fff; display: grid; place-items: center; } .hover svg { stroke: #666; }

.filters { width: 201px; background: #fff; border-left: 1px solid #b5b5b5; color: #252423; }
.filters svg { stroke: #333; }
.fhead { height: 39px; padding: 0 12px 0 14px; display: flex; align-items: center; }
.fhead b { margin-left: 9px; width: 113px; font-weight: 600; font-size: 15px; letter-spacing: -.35px; } .chev { margin-left: auto; }
.fhead svg.chev { stroke-width: 1.500; }
.fsearch { width: 180px; height: 31px; margin: 6px 0 4px 8px; border: 1px solid #aaa; display: flex; align-items: center; gap: 15px; padding: 0 0 2px 11px; font-size: 13px; letter-spacing: -.4px; }
.fbody { border-top: 1px solid #999; padding: 15px 8px 0; font-size: 12px; letter-spacing: -.25px; }
.fbody h3 { font-weight: 400; font-size: 12px; line-height: 20px; display: flex; justify-content: space-between; padding-right: 5px; }
.fbody h3 em, .vtabs em { font-style: normal; letter-spacing: 0; }
.city { height: 46px; margin-top: 6px; border: 1px solid #ccc; padding: 4px 8px; line-height: 18px; margin-bottom: 6px; }
.add { height: 46px; border: 1px solid #333; display: grid; place-items: center; margin-bottom: 25px; }
h3 + .add { margin-top: 6px; }

.pages { height: 35px; background: #292929; display: flex; }
.dev { width: 24px; margin-left: 10px; height: 31px; padding: 6px 3px 0; border-bottom: 3px solid #2aac94; } .dev svg, .phone { stroke-width: 1.500; stroke: #fff; }
.phone { margin: 5px 0 0 26px; } .arr { margin: 14px 0 0 21px; stroke: #999; }
.ptab { width: 76px; margin-left: 6px; border-left: 1px solid #666; border-bottom: 4px solid #2aac94; color: #fff; font-weight: 700; font-size: 12px; line-height: 37px; height: 35px; text-align: center; letter-spacing: -.6px; }
.plus { width: 40px; background: #2aac94; padding: 11px 0 0 15px; } .plus svg { stroke: #222; stroke-width: 3; }

.viz, .data { width: 181px; border-left: 1px solid #666; color: #fff; }
.phead { height: 38px; padding: 0 10px 0 8px; display: flex; align-items: center; justify-content: space-between; font-size: 15px; letter-spacing: -.35px; } .phead b { font-weight: 600; }
.phead svg { stroke: #fff; stroke-width: 2; }
.viz h4 { margin: -1px 0 0 8px; font-size: 12px; line-height: 18px; letter-spacing: -.4px; font-weight: 600; }
.modes { margin: 2px 11px 0 11px; height: 32px; display: flex; justify-content: space-between; align-items: center; }
.modes svg { stroke: #bbb; } .sel { width: 32px; height: 32px; background: #2b2b2b; display: grid; place-items: center; }
.notch { margin-top: 5px; stroke: #777; }
.vsearch { height: 27px; margin: 8px 8px 0; border: 1px solid #777; background: #292929; display: flex; align-items: center; gap: 5px; padding-left: 7px; font-size: 14px; letter-spacing: -.55px; }
.vtabs { margin: 16px 18px 0 12px; display: flex; font-size: 14px; line-height: 20px; letter-spacing: -.45px; } .vtabs b { height: 26px; width: 38px; letter-spacing: -1px; border-bottom: 2px solid #2aac94; margin-right: 15px; } .vtabs em { margin: -4px 0 0 auto; font-weight: 700; }
.opt { height: 41px; border-bottom: 1px solid #666; padding: 0 8px 0 12px; display: flex; align-items: center; font-size: 12px; font-weight: 600; letter-spacing: -.35px; }
.vtabs + .opt { margin-top: 13px; }
.opt i, .tree i { width: 6px; height: 6px; margin: 0 8px 0 -2px; border: solid #fff; border-width: 2px 2px 0 0; transform: rotate(45deg); }
.tree i { border-width: 1.500px 1.500px 0 0; }
.toggle { margin-left: auto; width: 32px; height: 16px; border-radius: 8px; background: #2aac94; color: #222; font-size: 9.500px; font-weight: 400; display: flex; align-items: center; padding: 0 5px; justify-content: space-between; } .toggle u { width: 8px; height: 8px; border-radius: 50%; background: #222; }
.dsearch { width: 172px; height: 25px; margin: 7px 0 0 4px; border: 1px solid #888; border-radius: 3px; background: #222; display: flex; align-items: center; gap: 7px; padding: 0 0 2px 12px; font-size: 14px; letter-spacing: -.5px; color: #999; } .dsearch svg { stroke: #999; }
.tree { margin: 9px 0 0 17px; display: flex; align-items: center; font-size: 12px; font-weight: 600; letter-spacing: -.6px; height: 22px; } .tree svg { margin-top: 5px; }

.status { height: 24px; border-top: 1px solid #666; display: flex; align-items: center; padding: 2px 14px 0 4px; font-size: 12px; letter-spacing: -.25px; justify-content: space-between; } .status svg text { font-size: 12px; fill: #ddd; }
.taskbar { height: 41px; border-top: 1px solid #050505; background: linear-gradient(90deg, #22363f, #213744 45%, #1d2c43 80%, #1a2743); display: flex; color: #fff; padding-left: 16px; }
.taskbar svg { stroke: #fff; } .start { margin-top: 12px; }
.tsearch { width: 288px; margin-left: 16px; background: #333; border: 1px solid #666; display: flex; align-items: center; padding-left: 12px; font-size: 15px; letter-spacing: -.5px; color: #ccc; gap: 10px; } .tsearch .art { margin: 2px 0 0 auto; }
.tview { margin: 12px 0 0 16px; } .apps { margin-left: 22px; display: flex; }
.apps span { width: 40px; margin-right: 9px; display: grid; place-items: center; border-bottom: 2px solid transparent; } .apps .run { border-color: #76b9ed; }
.apps .active { width: 44px; background: #4b5d67; margin-left: -4px; margin-right: 0; box-shadow: 3px 0 #3b4c59; }
.tray { margin-left: auto; display: flex; align-items: center; padding-right: 16px; font-size: 14px; letter-spacing: -.4px; } .temp { width: 31px; margin-left: 6px; } .cloudy { width: 88px; margin: 0 23px 0 7px; }
.clock { width: 54px; margin: 0 16px 0 8px; font-size: 12px; line-height: 17px; text-align: center; letter-spacing: -.35px; } .note text { font: 11px "Open Sans"; }
```
